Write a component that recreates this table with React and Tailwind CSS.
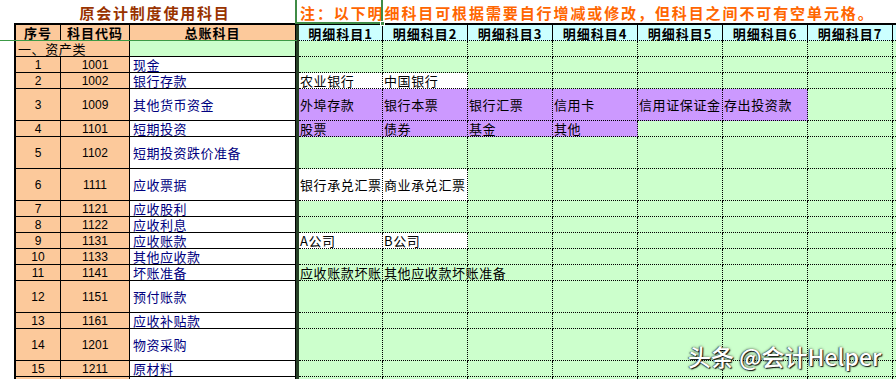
import React from 'react';

const CJK = { fontFamily: '"Noto Sans CJK SC", "Liberation Sans", sans-serif' };
const NUM = { fontFamily: '"Liberation Sans", Arial, sans-serif' };

const W = [84, 85, 85, 85, 85, 85, 85];

const rows = [
  { no: 1, code: '1001', name: '现金' },
  { no: 2, code: '1002', name: '银行存款', d: [['农业银行', 'w'], ['中国银行', 'w']] },
  {
    no: 3, code: '1009', name: '其他货币资金', tall: true,
    d: [['外埠存款', 'p'], ['银行本票', 'p'], ['银行汇票', 'p'], ['信用卡', 'p'], ['信用证保证金', 'p'], ['存出投资款', 'p']],
  },
  { no: 4, code: '1101', name: '短期投资', d: [['股票', 'p'], ['债券', 'p'], ['基金', 'p'], ['其他', 'p']] },
  { no: 5, code: '1102', name: '短期投资跌价准备', tall: true },
  { no: 6, code: '1111', name: '应收票据', tall: true, d: [['银行承兑汇票', 'w'], ['商业承兑汇票', 'w']] },
  { no: 7, code: '1121', name: '应收股利' },
  { no: 8, code: '1122', name: '应收利息' },
  { no: 9, code: '1131', name: '应收账款', d: [['A公司', 'w'], ['B公司', 'w']] },
  { no: 10, code: '1133', name: '其他应收款' },
  { no: 11, code: '1141', name: '坏账准备', d: [['应收账款坏账准备', 'g'], ['其他应收款坏账准备', 'g', true]] },
  { no: 12, code: '1151', name: '预付账款', tall: true },
  { no: 13, code: '1161', name: '应收补贴款' },
  { no: 14, code: '1201', name: '物资采购', tall: true },
  { no: 15, code: '1211', name: '原材料' },
  { no: 16, code: '', name: '' },
];

const bgFor = { w: 'bg-white', p: 'bg-[#cc99ff]', g: 'bg-[#ccffcc]' };

function DetailCells({ d = [] }) {
  return (
    <>
      {W.map((w, i) => {
        const cell = d[i];
        const bg = cell ? bgFor[cell[1]] : 'bg-[#ccffcc]';
        const spill = cell && cell[2];
        return (
          <div
            key={i}
            style={{ width: w }}
            className={`shrink-0 flex items-center border-r border-b border-dotted border-black ${bg} ${
              spill ? 'overflow-visible' : 'overflow-hidden'
            }`}
          >
            {cell && (
              <span className="relative z-10 whitespace-nowrap pl-[1px] pt-px text-[13px] tracking-[0.6px] text-black leading-[14px]" style={CJK}>
                {cell[0]}
              </span>
            )}
          </div>
        );
      })}
      <div className="flex-1 border-b border-dotted border-black bg-[#ccffcc]" />
    </>
  );
}

function Row({ r }) {
  return (
    <div className={`flex shrink-0 ${r.tall ? 'h-[32px]' : 'h-[16px]'}`}>
      <div className="w-[14px] shrink-0 bg-white" />
      <div className="w-[47px] shrink-0 flex items-center justify-center border-l-2 border-r border-b border-black bg-[#fcc99b] text-[12px] leading-[14px] text-black" style={NUM}>
        {r.no}
      </div>
      <div className="w-[69px] shrink-0 flex items-center justify-center border-r border-b border-black bg-[#fcc99b] text-[12px] leading-[14px] text-black" style={NUM}>
        {r.code}
      </div>
      <div className="w-[166px] shrink-0 flex items-center pl-[3px] pt-px border-r border-b border-black bg-white text-[13px] leading-[14px] tracking-[0.5px] text-[#000080] whitespace-nowrap overflow-hidden" style={CJK}>
        {r.name}
      </div>
      <div className="w-[3px] shrink-0 bg-[#263f26]" />
      <DetailCells d={r.d} />
    </div>
  );
}

export default function App() {
  return (
    <div className="relative w-[896px] h-[379px] overflow-hidden bg-white flex flex-col">
      {/* title row */}
      <div className="flex h-[23px] shrink-0 items-center pt-[2px]">
        <div className="w-[14px] shrink-0" />
        <div className="w-[282px] shrink-0 text-center text-[15px] leading-[18px] font-bold tracking-[1.8px] text-[#993300]" style={CJK}>
          原会计制度使用科目
        </div>
        <div className="pl-[4px] whitespace-nowrap text-[15px] leading-[18px] font-bold tracking-[1.9px] text-[#ff6600]" style={CJK}>
          注：以下明细科目可根据需要自行增减或修改，但科目之间不可有空单元格。
        </div>
      </div>

      {/* header row */}
      <div className="flex h-[18px] shrink-0">
        <div className="w-[14px] shrink-0 bg-white" />
        <div className="flex flex-1 border-t-2 border-black">
          <div className="w-[47px] shrink-0 flex items-center justify-center border-l-2 border-r border-b border-black bg-[#fcc99b] text-[13px] leading-[15px] font-bold tracking-[1px] text-black" style={CJK}>
            序号
          </div>
          <div className="w-[69px] shrink-0 flex items-center justify-center border-r border-b border-black bg-[#fcc99b] text-[13px] leading-[15px] font-bold tracking-[1px] text-black" style={CJK}>
            科目代码
          </div>
          <div className="w-[166px] shrink-0 flex items-center justify-center border-r border-b border-black bg-[#fcc99b] text-[13px] leading-[15px] font-bold tracking-[1px] text-black" style={CJK}>
            总账科目
          </div>
          <div className="w-[3px] shrink-0 bg-[#263f26]" />
          {W.map((w, i) => (
            <div
              key={i}
              style={{ width: w }}
              className="shrink-0 flex items-center justify-center border-r border-black bg-[#ccffff] text-[13px] leading-[15px] font-bold tracking-[1px] text-black"
            >
              <span style={CJK}>明细科目{i + 1}</span>
            </div>
          ))}
          <div className="flex-1 bg-[#ccffff]" />
        </div>
      </div>

      {/* section row */}
      <div className="flex h-[16px] shrink-0">
        <div className="w-[14px] shrink-0 bg-white" />
        <div className="w-[116px] shrink-0 flex items-center pl-[2px] pt-px border-l-2 border-r border-b border-black bg-[#fcc99b] text-[13px] leading-[14px] tracking-[0.6px] text-black" style={CJK}>
          一、资产类
        </div>
        <div className="w-[166px] shrink-0 border-r border-b border-black bg-[#ccffcc]" />
        <div className="w-[3px] shrink-0 bg-[#263f26]" />
        <DetailCells />
      </div>

      {rows.map((r) => (
        <Row key={r.no} r={r} />
      ))}

      {/* dotted bottom line under detail header */}
      <div className="absolute left-[299px] right-0 top-[40px] border-t border-dotted border-black" />

      {/* freeze pane line */}
      <div className="absolute left-0 top-[40px] w-[297px] h-px bg-[#3c9a46]" />

      {/* selected cell */}
      <div className="absolute left-[295px] top-[-3px] w-[88px] h-[27px] border-2 border-[#3f8b46]" />
      <div className="absolute left-[380px] top-[21px] w-[5px] h-[5px] bg-[#3f8b46] border border-white" />

      {/* watermark */}
      <div
        className="absolute left-[688px] top-[341px] whitespace-nowrap text-[23px] leading-[30px] font-medium text-white [text-shadow:1px_1px_1px_rgba(0,0,0,0.9),-1px_0_1px_rgba(0,0,0,0.5),0_0_3px_rgba(0,0,0,0.6)]"
        style={CJK}
      >
        头条 @会计Helper
      </div>
    </div>
  );
}
